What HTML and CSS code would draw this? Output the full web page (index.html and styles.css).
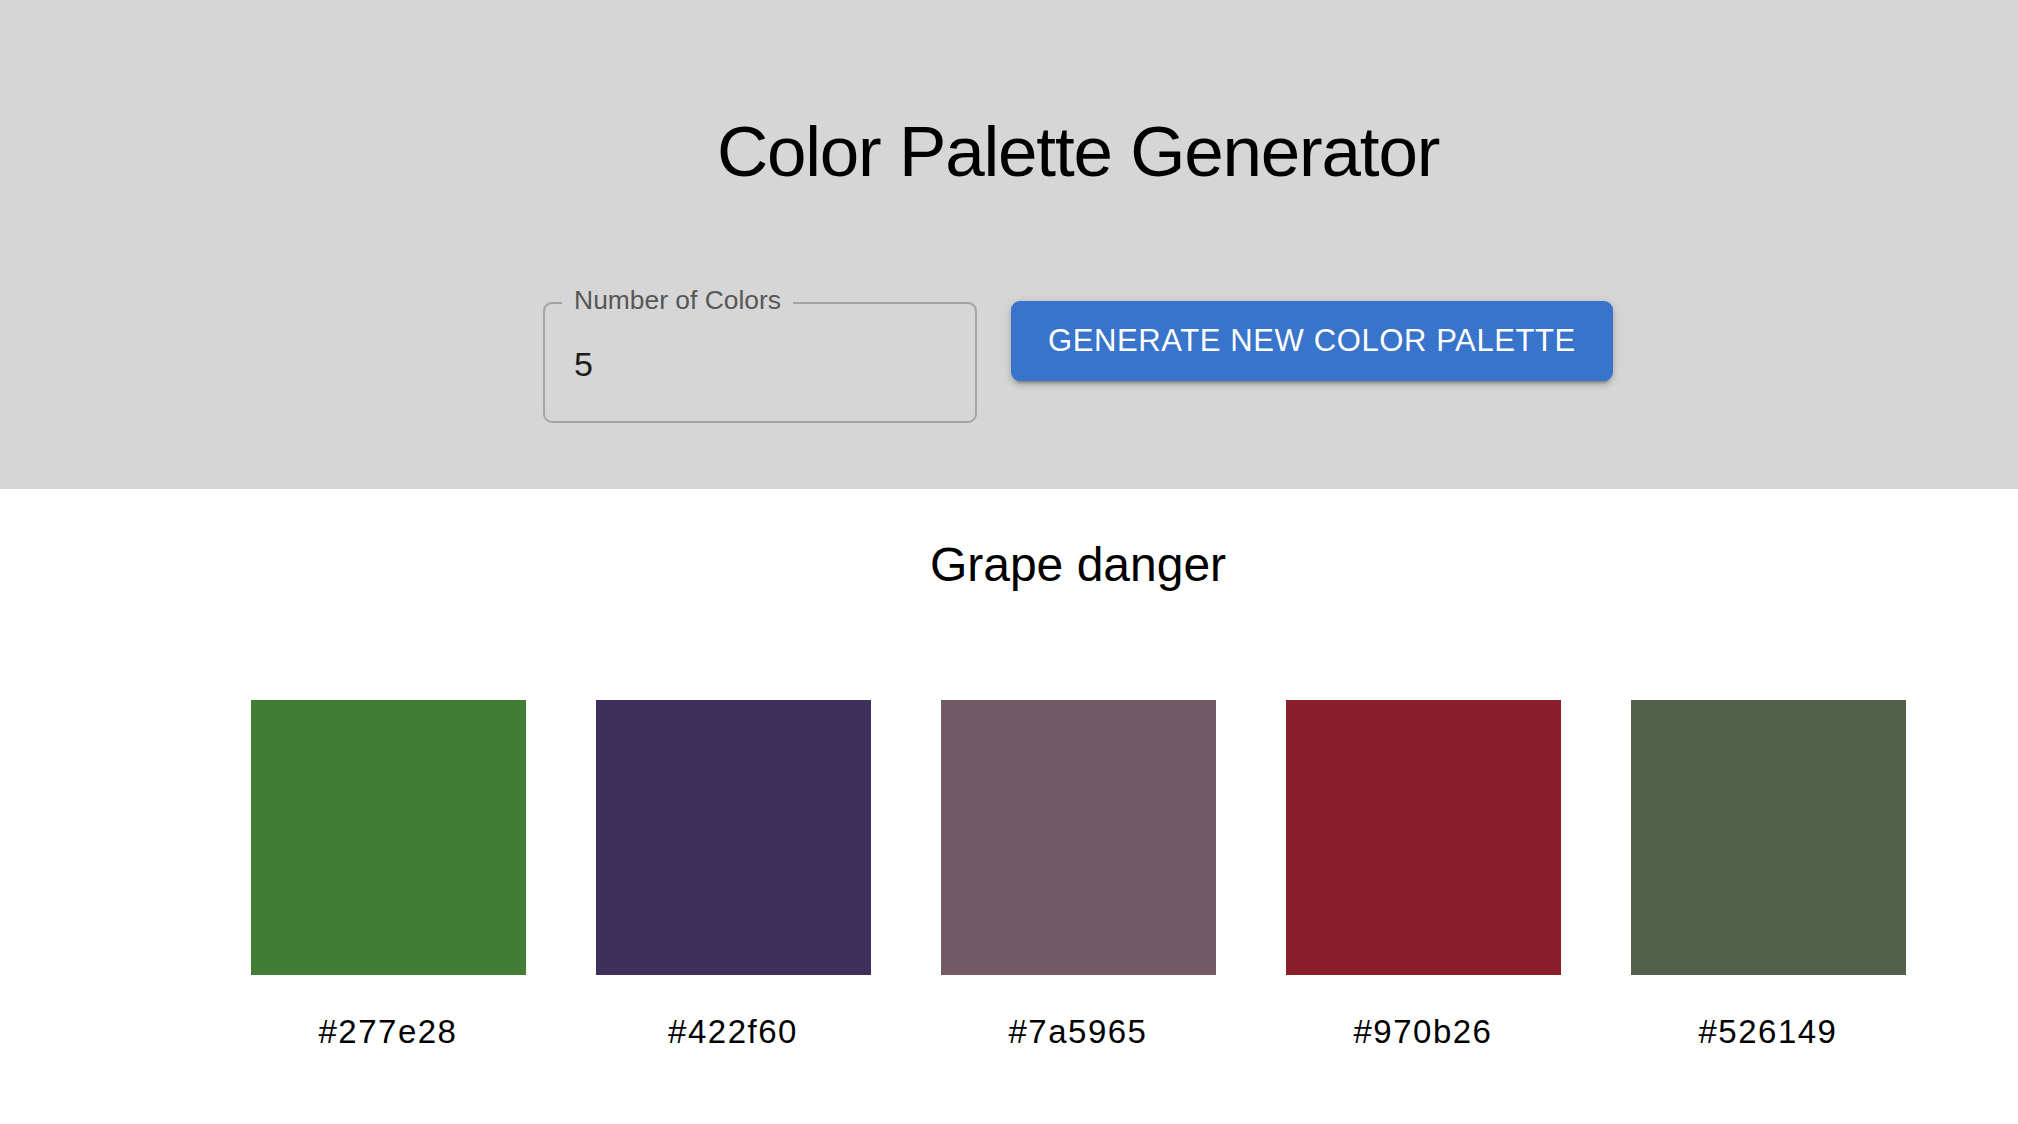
FILE: index.html
```html
<!DOCTYPE html>
<html lang="en">
<head>
<meta charset="utf-8">
<title>Color Palette Generator</title>
<link rel="stylesheet" href="styles.css">
</head>
<body>
<header class="header">
  <h1 class="title">Color Palette Generator</h1>
  <div class="controls">
    <div class="field">
      <span class="field-label">Number of Colors</span>
      <div class="field-value">5</div>
    </div>
    <button class="btn" type="button">GENERATE NEW COLOR PALETTE</button>
  </div>
</header>
<main class="palette">
  <h2 class="palette-name">Grape danger</h2>
  <div class="swatches">
    <div class="swatch-item">
      <div class="swatch swatch-1"></div>
      <div class="hex">#277e28</div>
    </div>
    <div class="swatch-item">
      <div class="swatch swatch-2"></div>
      <div class="hex">#422f60</div>
    </div>
    <div class="swatch-item">
      <div class="swatch swatch-3"></div>
      <div class="hex">#7a5965</div>
    </div>
    <div class="swatch-item">
      <div class="swatch swatch-4"></div>
      <div class="hex">#970b26</div>
    </div>
    <div class="swatch-item">
      <div class="swatch swatch-5"></div>
      <div class="hex">#526149</div>
    </div>
  </div>
</main>
</body>
</html>
```
FILE: styles.css
```css
html, body {
  margin: 0;
  padding: 0;
}

body {
  font-family: "Liberation Sans", Arial, Helvetica, sans-serif;
  background: #ffffff;
  color: #000000;
}

.header {
  background: #d6d6d6;
  height: 489px;
  box-sizing: border-box;
  padding-top: 116px;
  padding-left: 138px;
}

.title {
  margin: 0;
  font-size: 71px;
  line-height: 71px;
  font-weight: 400;
  letter-spacing: -1.2px;
  text-align: center;
  color: #000000;
}

.controls {
  display: flex;
  justify-content: center;
  align-items: flex-start;
  gap: 34px;
  margin-top: 114px;
}

.field {
  position: relative;
  width: 434px;
  height: 121px;
  margin-top: 1px;
  box-sizing: border-box;
  border: 2px solid #a4a4a4;
  border-radius: 9px;
}

.field-label {
  position: absolute;
  left: 17px;
  top: -19px;
  padding: 0 12px;
  background: #d6d6d6;
  font-size: 26.4px;
  line-height: 30px;
  color: #575757;
  white-space: nowrap;
}

.field-value {
  padding-top: 40px;
  padding-left: 29px;
  font-size: 34px;
  line-height: 40px;
  color: #1c1c1c;
}

.btn {
  height: 80px;
  padding: 0 37px;
  border: none;
  border-radius: 9px;
  background: #3874cb;
  color: #ffffff;
  font-family: "Liberation Sans", Arial, Helvetica, sans-serif;
  font-size: 31px;
  letter-spacing: 0.6px;
  line-height: 80px;
  white-space: nowrap;
  box-shadow: 0 6px 2px -4px rgba(0, 0, 0, 0.2),
              0 4px 5px 0 rgba(0, 0, 0, 0.14),
              0 2px 11px 0 rgba(0, 0, 0, 0.12);
  cursor: pointer;
}

.palette {
  padding-left: 138px;
  padding-top: 48px;
  text-align: center;
}

.palette-name {
  margin: 0;
  font-size: 48px;
  line-height: 56px;
  font-weight: 400;
  color: #000000;
}

.swatches {
  display: flex;
  justify-content: center;
  gap: 70px;
  margin-top: 107px;
}

.swatch-item {
  width: 275px;
}

.swatch {
  width: 275px;
  height: 275px;
}

.swatch-1 { background: #427d35; }
.swatch-2 { background: #3f305b; }
.swatch-3 { background: #745a65; }
.swatch-4 { background: #8a1e2b; }
.swatch-5 { background: #54614a; }

.hex {
  margin-top: 37px;
  font-size: 33px;
  line-height: 40px;
  letter-spacing: 1.5px;
  color: #000000;
}
```
